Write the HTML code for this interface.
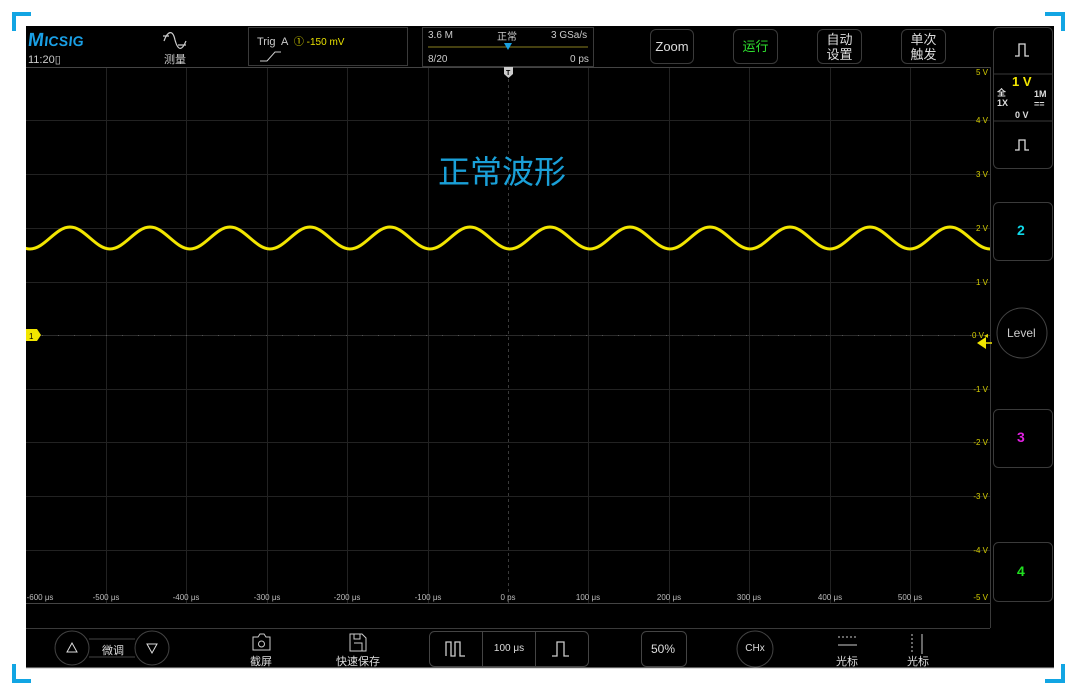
<!DOCTYPE html>
<html><head><meta charset="utf-8"><style>
*{margin:0;padding:0;box-sizing:border-box}
body{width:1080px;height:695px;background:#fff;position:relative;overflow:hidden;font-family:"Liberation Sans","Noto Sans CJK SC",sans-serif;color:#ddd}
.a{position:absolute}
.scr{left:26px;top:26px;width:1028px;height:642px;background:#000}
.c{position:absolute;background:#12a5e3}
.btn{position:absolute;border:1.5px solid #3a3a3a;border-radius:6px;color:#ddd;font-size:13px;text-align:center;line-height:15px;display:flex;align-items:center;justify-content:center}
.vl{position:absolute;right:92px;font-size:8px;color:#d8d000;width:30px;text-align:right}
.t{position:absolute;font-size:8px;color:#bbb;transform:translateX(-50%);top:593px}
.lbl{position:absolute;font-size:11px;color:#ddd;transform:translateX(-50%)}
</style></head><body>
<div class="c" style="left:12px;top:12px;width:19px;height:4px"></div>
<div class="c" style="left:12px;top:12px;width:4px;height:19px"></div>
<div class="c" style="left:1045px;top:12px;width:20px;height:4px"></div>
<div class="c" style="left:1061px;top:12px;width:4px;height:19px"></div>
<div class="c" style="left:12px;top:679px;width:19px;height:4px"></div>
<div class="c" style="left:12px;top:664px;width:4px;height:19px"></div>
<div class="c" style="left:1045px;top:679px;width:20px;height:4px"></div>
<div class="c" style="left:1061px;top:664px;width:4px;height:19px"></div>
<div class="a scr"></div>
<svg class="a" style="left:0;top:0" width="1080" height="695">
<g stroke="#222" stroke-width="1">
<line x1="26" y1="120.5" x2="990" y2="120.5"/><line x1="26" y1="174.5" x2="990" y2="174.5"/><line x1="26" y1="228.5" x2="990" y2="228.5"/><line x1="26" y1="282.5" x2="990" y2="282.5"/><line x1="26" y1="389.5" x2="990" y2="389.5"/><line x1="26" y1="442.5" x2="990" y2="442.5"/><line x1="26" y1="496.5" x2="990" y2="496.5"/><line x1="26" y1="550.5" x2="990" y2="550.5"/>
<line x1="106.5" y1="67" x2="106.5" y2="603"/><line x1="186.5" y1="67" x2="186.5" y2="603"/><line x1="267.5" y1="67" x2="267.5" y2="603"/><line x1="347.5" y1="67" x2="347.5" y2="603"/><line x1="428.5" y1="67" x2="428.5" y2="603"/><line x1="588.5" y1="67" x2="588.5" y2="603"/><line x1="669.5" y1="67" x2="669.5" y2="603"/><line x1="749.5" y1="67" x2="749.5" y2="603"/><line x1="830.5" y1="67" x2="830.5" y2="603"/><line x1="910.5" y1="67" x2="910.5" y2="603"/>
</g>
<line x1="26" y1="67.5" x2="990" y2="67.5" stroke="#444"/>
<line x1="26" y1="335.5" x2="990" y2="335.5" stroke="#2a2a2a"/>
<line x1="26" y1="335.5" x2="990" y2="335.5" stroke="#555" stroke-dasharray="1 15"/>
<line x1="508.5" y1="67" x2="508.5" y2="603" stroke="#3a3a3a" stroke-dasharray="3 3"/>
<line x1="26" y1="603.5" x2="990" y2="603.5" stroke="#444"/>
<line x1="26" y1="628.5" x2="990" y2="628.5" stroke="#3a3a3a"/>
<line x1="990.5" y1="67" x2="990.5" y2="628" stroke="#3a3a3a"/>
<line x1="26" y1="668" x2="1054" y2="668" stroke="#bbb"/>
<clipPath id="cp"><rect x="26" y="67" width="964" height="536"/></clipPath>
<path clip-path="url(#cp)" fill="none" stroke="#f2e600" stroke-width="3" d="M -10 227 C 4.5 227 15.5 249 30 249 S 55.5 227 70 227 S 95.5 249 110 249 S 135.5 227 150 227 S 175.5 249 190 249 S 215.5 227 230 227 S 255.5 249 270 249 S 295.5 227 310 227 S 335.5 249 350 249 S 375.5 227 390 227 S 415.5 249 430 249 S 455.5 227 470 227 S 495.5 249 510 249 S 535.5 227 550 227 S 575.5 249 590 249 S 615.5 227 630 227 S 655.5 249 670 249 S 695.5 227 710 227 S 735.5 249 750 249 S 775.5 227 790 227 S 815.5 249 830 249 S 855.5 227 870 227 S 895.5 249 910 249 S 935.5 227 950 227 S 975.5 249 990 249 S 1015.5 227 1030 227"/>
<path d="M26 329 H37 L41 335 L37 341 H26Z" fill="#f2e600"/>
<text x="29" y="339" font-size="8" fill="#000" font-family="Liberation Sans">1</text>
<path d="M977 343 L986 337 V349Z" fill="#f2e600"/><line x1="985" y1="343" x2="992" y2="343" stroke="#f2e600" stroke-width="1.5"/>
<path d="M504 67 H513 V74 L508.5 78 L504 74Z" fill="#ccc"/><text x="506" y="75" font-size="7" fill="#000" font-weight="bold">T</text>
<rect x="248.5" y="27.5" width="159" height="38" fill="none" stroke="#3a3a3a"/>
<rect x="422.5" y="27.5" width="171" height="39" fill="none" stroke="#3a3a3a"/>
<line x1="428" y1="47" x2="588" y2="47" stroke="#8a8020"/>
<path d="M504 43 H512 L508 50Z" fill="#1aa0e0"/>
<path d="M260 61 H267 L275 52 H281" fill="none" stroke="#ccc"/>
<path d="M164 41 C168 30 173 30 175 40 C178 51 182 51 186 41 M163 36 H169 M178 45 H186" fill="none" stroke="#ccc" stroke-width="1.2"/>
<rect x="993.5" y="27.5" width="59" height="141" rx="5" fill="none" stroke="#3a3a3a"/>
<line x1="994" y1="74" x2="1052" y2="74" stroke="#3a3a3a"/><line x1="994" y1="121" x2="1052" y2="121" stroke="#3a3a3a"/>
<path d="M1015 56 H1019 V44 H1025 V56 H1029" fill="none" stroke="#ddd" stroke-width="1.3"/>
<path d="M1015 150 H1019 V140 H1025 V150 H1029" fill="none" stroke="#ddd" stroke-width="1.3"/>
<rect x="993.5" y="202.5" width="59" height="58" rx="5" fill="none" stroke="#3a3a3a"/>
<rect x="993.5" y="409.5" width="59" height="58" rx="5" fill="none" stroke="#3a3a3a"/>
<rect x="993.5" y="542.5" width="59" height="59" rx="5" fill="none" stroke="#3a3a3a"/>
<circle cx="1022" cy="333" r="25" fill="none" stroke="#444"/>
<circle cx="72" cy="648" r="17" fill="none" stroke="#444"/>
<circle cx="152" cy="648" r="17" fill="none" stroke="#444"/>
<path d="M89 639 H135 M89 657 H135" stroke="#444"/>
<path d="M67 652 L72 643 L77 652Z M147 644 L152 653 L157 644Z" fill="none" stroke="#ddd"/>
<path d="M253 637 H258 L260 634 H264 L266 637 H270 V650 H253Z" fill="none" stroke="#ccc"/><circle cx="261.5" cy="644" r="3" fill="none" stroke="#ccc"/>
<path d="M350 634 H362 L366 638 V651 H350Z M354 643 H362 V651 M354 634 V639 H360 V634" fill="none" stroke="#ccc"/>
<rect x="429.5" y="631.5" width="159" height="35" rx="5" fill="none" stroke="#444"/>
<line x1="482.5" y1="632" x2="482.5" y2="666" stroke="#444"/><line x1="535.5" y1="632" x2="535.5" y2="666" stroke="#444"/>
<path d="M446 656 V642 H451 V656 H455 V642 H460 V656 H465" fill="none" stroke="#ccc" stroke-width="1.3"/>
<path d="M552 656 H557 V642 H564 V656 H569" fill="none" stroke="#ccc" stroke-width="1.3"/>
<rect x="641.5" y="631.5" width="45" height="35" rx="5" fill="none" stroke="#444"/>
<circle cx="755" cy="649" r="18" fill="none" stroke="#444"/>
<path d="M838 637 H857" stroke="#ccc" stroke-dasharray="2 2"/><path d="M838 645 H857" stroke="#ccc"/>
<path d="M912 634 V654" stroke="#ccc" stroke-dasharray="2 2"/><path d="M922 634 V654" stroke="#ccc"/>
</svg>
<div class="a" style="left:28px;top:30px;font-size:19px;font-weight:bold;font-style:italic;color:#1aa0e6;letter-spacing:0.3px;transform:skewX(5deg)">M<span style="font-size:14px">ICSIG</span></div>
<div class="a" style="left:28px;top:53px;font-size:11px;color:#ccc">11:20▯</div>
<div class="a" style="left:164px;top:51px;font-size:11px;color:#ccc">测量</div>
<div class="a" style="left:257px;top:33px;font-size:11px;color:#ccc">Trig&nbsp; A &nbsp;<span style="color:#e8e000;font-size:10px">① -150 mV</span></div>
<div class="a" style="left:428px;top:30px;font-size:10px;color:#ccc">3.6 M</div>
<div class="a" style="left:497px;top:28px;font-size:10px;color:#ccc">正常</div>
<div class="a" style="left:551px;top:30px;font-size:10px;color:#ccc">3 GSa/s</div>
<div class="a" style="left:428px;top:54px;font-size:10px;color:#ccc">8/20</div>
<div class="a" style="left:570px;top:54px;font-size:10px;color:#ccc">0 ps</div>
<div class="btn" style="left:650px;top:29px;width:44px;height:35px">Zoom</div>
<div class="btn" style="left:733px;top:29px;width:45px;height:35px;color:#2ee02e">运行</div>
<div class="btn" style="left:817px;top:29px;width:45px;height:35px">自动<br>设置</div>
<div class="btn" style="left:901px;top:29px;width:45px;height:35px">单次<br>触发</div>
<div class="a" style="left:1012px;top:74px;font-size:13px;font-weight:bold;color:#f2e600">1 V</div>
<div class="a" style="left:997px;top:88px;font-size:9px;color:#ddd;font-weight:bold;line-height:10px">全<br>1X</div>
<div class="a" style="left:1034px;top:89px;font-size:9px;color:#ddd;font-weight:bold;line-height:10px">1M<br>==</div>
<div class="a" style="left:1015px;top:110px;font-size:9px;color:#ddd;font-weight:bold">0 V</div>
<div class="a" style="left:1017px;top:222px;font-size:14px;font-weight:bold;color:#10d8e8">2</div>
<div class="a" style="left:1017px;top:429px;font-size:14px;font-weight:bold;color:#e020e0">3</div>
<div class="a" style="left:1017px;top:563px;font-size:14px;font-weight:bold;color:#20e020">4</div>
<div class="a" style="left:1007px;top:326px;font-size:12px;color:#ccc">Level</div>
<div class="a" style="left:438px;top:147px;font-size:32px;color:#1aa0d8">正常波形</div>
<div class="vl" style="top:68px">5 V</div><div class="vl" style="top:116px">4 V</div><div class="vl" style="top:170px">3 V</div><div class="vl" style="top:224px">2 V</div><div class="vl" style="top:278px">1 V</div><div class="vl" style="top:331px">0 V◂</div><div class="vl" style="top:385px">-1 V</div><div class="vl" style="top:438px">-2 V</div><div class="vl" style="top:492px">-3 V</div><div class="vl" style="top:546px">-4 V</div><div class="vl" style="top:593px">-5 V</div>
<div class="t" style="left:40px">-600 μs</div><div class="t" style="left:106px">-500 μs</div><div class="t" style="left:186px">-400 μs</div><div class="t" style="left:267px">-300 μs</div><div class="t" style="left:347px">-200 μs</div><div class="t" style="left:428px">-100 μs</div><div class="t" style="left:508px">0 ps</div><div class="t" style="left:588px">100 μs</div><div class="t" style="left:669px">200 μs</div><div class="t" style="left:749px">300 μs</div><div class="t" style="left:830px">400 μs</div><div class="t" style="left:910px">500 μs</div>
<div class="lbl" style="left:113px;top:642px">微调</div>
<div class="lbl" style="left:261px;top:653px">截屏</div>
<div class="lbl" style="left:358px;top:653px">快速保存</div>
<div class="lbl" style="left:509px;top:643px;font-size:10px">100 μs</div>
<div class="lbl" style="left:663px;top:642px;font-size:12px">50%</div>
<div class="lbl" style="left:755px;top:643px;font-size:10px">CHx</div>
<div class="lbl" style="left:847px;top:653px">光标</div>
<div class="lbl" style="left:918px;top:653px">光标</div>
</body></html>
